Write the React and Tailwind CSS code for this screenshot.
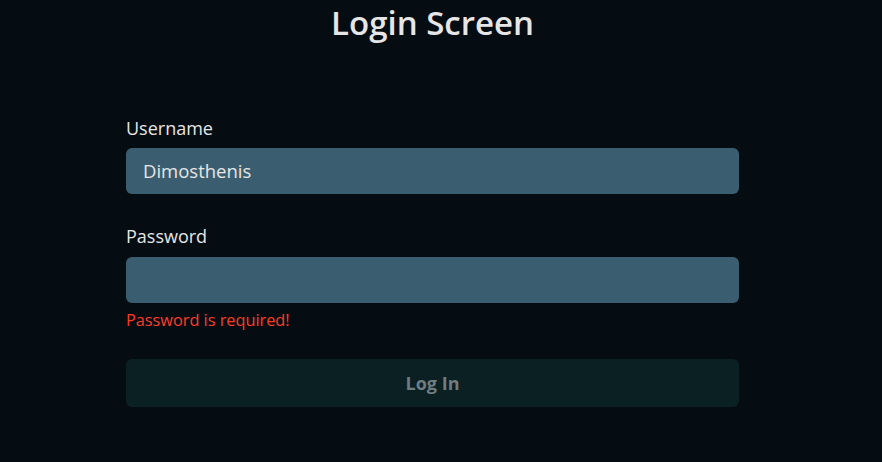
export default function App() {
  return (
    <div className="w-[882px] h-[462px] bg-[#050c12] overflow-hidden">
      <div className="w-[865px] flex flex-col items-center font-['Segoe_UI','Open_Sans','Noto_Sans',sans-serif]">
        <h1 className="mt-[3px] text-[33px] leading-[40px] font-semibold text-[#e6e6e6]">Login Screen</h1>
        <div className="w-[613px] mt-[73px] flex flex-col">
          <label className="text-[18px] leading-[24px] text-[#e6e6e6]">Username</label>
          <div className="mt-[8px] h-[46px] rounded-[6px] bg-[#3a5e6f] flex items-center px-[17px] text-[18.5px] text-[#e6e6e6]">Dimosthenis</div>
          <label className="mt-[30px] text-[18px] leading-[24px] text-[#e6e6e6]">Password</label>
          <div className="mt-[9px] h-[46px] rounded-[6px] bg-[#3a5e6f]"></div>
          <div className="mt-[6px] text-[16.3px] leading-[22px] text-[#ff3b25]">Password is required!</div>
          <div className="mt-[28px] h-[48px] rounded-[6px] bg-[#0b2023] flex items-center justify-center text-[18px] font-bold text-[#6f7c80]">Log In</div>
        </div>
      </div>
    </div>
  );
}
